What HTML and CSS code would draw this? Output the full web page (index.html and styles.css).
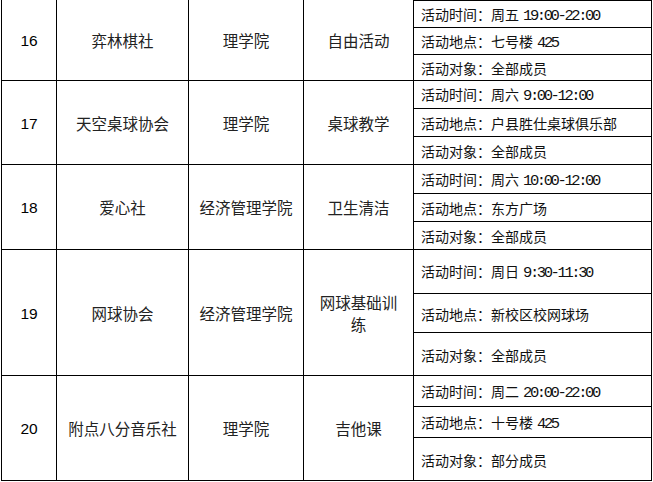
FILE: index.html
```html
<!DOCTYPE html>
<html lang="zh-CN">
<head>
<meta charset="utf-8">
<title>社团活动表</title>
<link rel="stylesheet" href="styles.css">
</head>
<body>
<div class="sheet">
  <div class="row">
    <div class="cell num">16</div>
    <div class="cell name">弈林棋社</div>
    <div class="cell name">理学院</div>
    <div class="cell name">自由活动</div>
    <div class="detail first">
      <div class="sub h27"><span class="t">活动时间：周五<span class="n">19:00-22:00</span></span></div>
      <div class="sub h27"><span class="t">活动地点：七号楼<span class="n">425</span></span></div>
      <div class="sub h26"><span class="t">活动对象：全部成员</span></div>
    </div>
  </div>
  <div class="row">
    <div class="cell num">17</div>
    <div class="cell name">天空桌球协会</div>
    <div class="cell name">理学院</div>
    <div class="cell name">桌球教学</div>
    <div class="detail">
      <div class="sub h28"><span class="t">活动时间：周六<span class="n">9:00-12:00</span></span></div>
      <div class="sub h28"><span class="t">活动地点：户县胜仕桌球俱乐部</span></div>
      <div class="sub h28"><span class="t">活动对象：全部成员</span></div>
    </div>
  </div>
  <div class="row">
    <div class="cell num">18</div>
    <div class="cell name">爱心社</div>
    <div class="cell name">经济管理学院</div>
    <div class="cell name">卫生清洁</div>
    <div class="detail">
      <div class="sub h29"><span class="t">活动时间：周六<span class="n">10:00-12:00</span></span></div>
      <div class="sub h28"><span class="t">活动地点：东方广场</span></div>
      <div class="sub h28"><span class="t">活动对象：全部成员</span></div>
    </div>
  </div>
  <div class="row">
    <div class="cell num">19</div>
    <div class="cell name">网球协会</div>
    <div class="cell name">经济管理学院</div>
    <div class="cell name">网球基础训<br>练</div>
    <div class="detail">
      <div class="sub h44"><span class="t">活动时间：周日<span class="n">9:30-11:30</span></span></div>
      <div class="sub h39"><span class="t">活动地点：新校区校网球场</span></div>
      <div class="sub h43"><span class="t">活动对象：全部成员</span></div>
    </div>
  </div>
  <div class="row">
    <div class="cell num">20</div>
    <div class="cell name">附点八分音乐社</div>
    <div class="cell name">理学院</div>
    <div class="cell name">吉他课</div>
    <div class="detail">
      <div class="sub h31"><span class="t">活动时间：周二<span class="n">20:00-22:00</span></span></div>
      <div class="sub h31"><span class="t">活动地点：十号楼<span class="n">425</span></span></div>
      <div class="sub h43"><span class="t">活动对象：部分成员</span></div>
    </div>
  </div>
</div>
</body>
</html>
```

FILE: styles.css
```css
html, body {
  margin: 0;
  padding: 0;
  background: #ffffff;
}

body {
  width: 653px;
  height: 482px;
  overflow: hidden;
  font-family: "Noto Sans CJK SC", sans-serif;
  color: #111111;
}

.sheet {
  margin-left: 1px;
  width: 651px;
  border-left: 1px solid #000000;
  box-sizing: border-box;
}

.row {
  display: grid;
  grid-template-columns: 55px 132px 115px 110px 238px;
}

.cell {
  box-sizing: border-box;
  border-right: 1px solid #000000;
  border-bottom: 1px solid #000000;
  display: flex;
  align-items: center;
  justify-content: center;
  text-align: center;
}

.num {
  font-family: "Liberation Sans", Arial, sans-serif;
  font-size: 15.5px;
  color: #000000;
  padding-top: 2px;
}

.name {
  font-size: 15.5px;
  line-height: 22px;
  color: #222222;
}

.detail {
  box-sizing: border-box;
  border-right: 1px solid #000000;
  display: flex;
  flex-direction: column;
}

.detail.first {
  border-top: 1px solid #000000;
}

.sub {
  box-sizing: border-box;
  border-bottom: 1px solid #000000;
  display: flex;
  align-items: center;
  padding-left: 7px;
  font-size: 14px;
  white-space: nowrap;
  color: #111111;
}

.t {
  display: block;
  line-height: 18px;
  padding-top: 1px;
}

.n {
  font-family: "Liberation Mono", "Courier New", monospace;
  font-size: 15.5px;
  letter-spacing: -2.4px;
  margin-left: 4px;
}

.h26 { height: 26px; }
.h27 { height: 27px; }
.h28 { height: 28px; }
.h29 { height: 29px; }
.h31 { height: 31px; }
.h39 { height: 39px; }
.h43 { height: 43px; }
.h44 { height: 44px; }
```
